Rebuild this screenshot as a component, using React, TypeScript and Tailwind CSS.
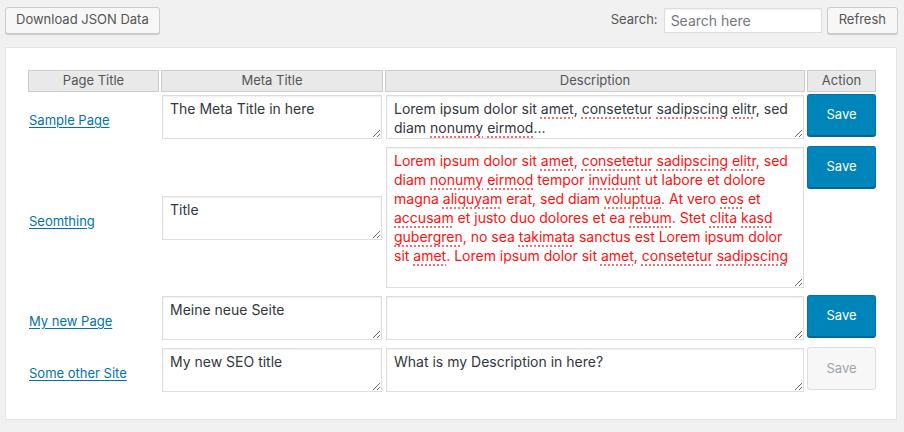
import React from "react";

const sq = (text: string) =>
  text.split(/(~[^~]+~)/).map((part, i) =>
    part.startsWith("~") ? (
      <span
        key={i}
        className="underline decoration-dotted decoration-[#ee7070] decoration-2 underline-offset-[3px]"
      >
        {part.slice(1, -1)}
      </span>
    ) : (
      <React.Fragment key={i}>{part}</React.Fragment>
    )
  );

const Lines = ({ lines }: { lines: string[] }) => (
  <>
    {lines.map((l, i) => (
      <React.Fragment key={i}>
        {sq(l)}
        {i < lines.length - 1 && <br />}
      </React.Fragment>
    ))}
  </>
);

const boxBase =
  "block w-full mb-[4px] border border-[#ddd] bg-white px-[7px] py-[3px] text-[14px] leading-[19px] shadow-[inset_0_1px_2px_rgba(0,0,0,0.07)] outline-none font-[family-name:Inter,sans-serif]";

function TA({ value }: { value: string }) {
  return (
    <textarea
      defaultValue={value}
      spellCheck={false}
      className={`${boxBase} h-[44px] text-[#32373c] resize overflow-hidden`}
    />
  );
}

function DescBox({ lines, red, h }: { lines: string[]; red?: boolean; h: string }) {
  return (
    <div
      role="textbox"
      className={`${boxBase} ${h} resize overflow-hidden ${red ? "text-[#ff1010]" : "text-[#32373c]"}`}
    >
      <Lines lines={lines} />
    </div>
  );
}

function SaveBtn({ disabled }: { disabled?: boolean }) {
  return disabled ? (
    <button
      disabled
      className="block w-full h-[43px] rounded-[3px] border border-[#ddd] bg-[#f7f7f7] text-[13px] text-[#a0a5aa]"
    >
      Save
    </button>
  ) : (
    <button className="block w-full h-[42px] rounded-[3px] border border-[#0073aa] border-b-[#006799] bg-[#0085ba] text-[13px] text-white shadow-[0_1px_0_#006799]">
      Save
    </button>
  );
}

const linkCls = "text-[13px] text-[#0073aa] underline underline-offset-2";

export default function App() {
  const th =
    "h-[22px] p-0 border border-[#ccc] bg-[#e9e9e9] text-[13px] font-normal text-[#555] text-center";
  return (
    <div className="w-[904px] h-[432px] bg-[#f1f1f1] pl-[5px] pr-[6px] pt-[6px] text-[#32373c] font-[family-name:Inter,sans-serif]">
      <div className="flex items-center justify-between h-[28px]">
        <button className="h-[27px] px-[10px] rounded-[3px] border border-[#ccc] bg-[#f7f7f7] text-[13px] text-[#555] shadow-[0_1px_0_#ccc]">
          Download JSON Data
        </button>
        <div className="flex items-center">
          <label className="text-[13px] text-[#555] mr-[6px]">Search:</label>
          <input
            placeholder="Search here"
            className="w-[158px] h-[25px] border border-[#ddd] bg-white px-[6px] text-[14px] shadow-[inset_0_1px_2px_rgba(0,0,0,0.07)] placeholder:text-[#72777c] outline-none"
          />
          <button className="ml-[5px] h-[27px] px-[11px] rounded-[3px] border border-[#ccc] bg-[#f7f7f7] text-[13px] text-[#555] shadow-[0_1px_0_#ccc]">
            Refresh
          </button>
        </div>
      </div>

      <div className="mt-[13px] mr-[1px] h-[373px] bg-white border border-[#e5e5e5] pl-[20px] pt-[20px]">
        <table className="table-fixed border-separate border-spacing-[2px] w-[852px]">
          <colgroup>
            <col className="w-[131px]" />
            <col className="w-[222px]" />
            <col className="w-[420px]" />
            <col className="w-[69px]" />
          </colgroup>
          <thead>
            <tr>
              <th className={th}>Page Title</th>
              <th className={th}>Meta Title</th>
              <th className={th}>Description</th>
              <th className={th}>Action</th>
            </tr>
          </thead>
          <tbody>
            <tr>
              <td className="p-[1px] align-middle">
                <a href="#" className={linkCls}>Sample Page</a>
              </td>
              <td className="p-[1px] align-middle">
                <TA value="The Meta Title in here" />
              </td>
              <td className="p-[1px] align-top">
                <DescBox
                  h="h-[44px]"
                  lines={[
                    "Lorem ipsum dolor sit ~amet~, ~consetetur~ ~sadipscing~ ~elitr~, sed",
                    "diam ~nonumy~ ~eirmod~...",
                  ]}
                />
              </td>
              <td className="p-0 align-top">
                <SaveBtn />
              </td>
            </tr>
            <tr>
              <td className="p-[1px] align-middle">
                <a href="#" className={linkCls}>Seomthing</a>
              </td>
              <td className="p-[1px] align-middle">
                <TA value="Title" />
              </td>
              <td className="p-[1px] align-top">
                <DescBox
                  red
                  h="h-[141px]"
                  lines={[
                    "Lorem ipsum dolor sit ~amet~, ~consetetur~ ~sadipscing~ ~elitr~, sed",
                    "diam ~nonumy~ ~eirmod~ tempor ~invidunt~ ut labore et dolore",
                    "magna ~aliquyam~ erat, sed diam ~voluptua~. At vero ~eos~ et",
                    "~accusam~ et justo duo dolores et ea ~rebum~. Stet ~clita~ ~kasd~",
                    "~gubergren~, no sea ~takimata~ sanctus est Lorem ipsum dolor",
                    "sit ~amet~. Lorem ipsum dolor sit ~amet~, ~consetetur~ ~sadipscing~",
                  ]}
                />
              </td>
              <td className="p-0 align-top">
                <SaveBtn />
              </td>
            </tr>
            <tr>
              <td className="p-[1px] align-middle">
                <a href="#" className={linkCls}>My new Page</a>
              </td>
              <td className="p-[1px] align-middle">
                <TA value="Meine neue Seite" />
              </td>
              <td className="p-[1px] align-top">
                <TA value="" />
              </td>
              <td className="p-0 align-top">
                <SaveBtn />
              </td>
            </tr>
            <tr>
              <td className="p-[1px] align-middle">
                <a href="#" className={linkCls}>Some other Site</a>
              </td>
              <td className="p-[1px] align-middle">
                <TA value="My new SEO title" />
              </td>
              <td className="p-[1px] align-top">
                <TA value="What is my Description in here?" />
              </td>
              <td className="p-0 align-top">
                <SaveBtn disabled />
              </td>
            </tr>
          </tbody>
        </table>
      </div>
    </div>
  );
}
